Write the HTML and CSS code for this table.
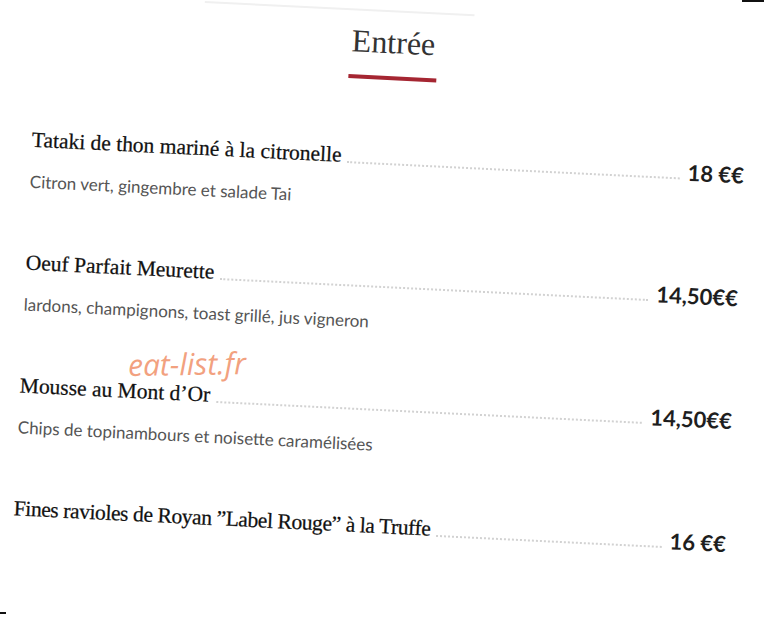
FILE: index.html
```html
<!DOCTYPE html>
<html lang="fr">
<head>
<meta charset="utf-8">
<title>Entrée</title>
<link rel="stylesheet" href="styles.css">
</head>
<body>
<div class="frame">
  <div class="page">
    <div class="topline"></div>
    <h1 class="heading">Entrée</h1>
    <div class="bar"></div>
    <div class="list">
      <div class="item">
        <div class="row"><span class="name">Tataki de thon mariné à la citronelle</span><span class="dots"></span><span class="price">18 €€</span></div>
        <div class="desc">Citron vert, gingembre et salade Tai</div>
      </div>
      <div class="item">
        <div class="row"><span class="name">Oeuf Parfait Meurette</span><span class="dots"></span><span class="price">14,50€€</span></div>
        <div class="desc">lardons, champignons, toast grillé, jus vigneron</div>
      </div>
      <div class="item">
        <div class="row"><span class="name">Mousse au Mont d’Or</span><span class="dots"></span><span class="price">14,50€€</span></div>
        <div class="desc">Chips de topinambours et noisette caramélisées</div>
      </div>
      <div class="item">
        <div class="row"><span class="name name-narrow">Fines ravioles de Royan ”Label Rouge” à la Truffe</span><span class="dots"></span><span class="price">16 €€</span></div>
      </div>
    </div>
  </div>
  <div class="watermark">eat-list.fr</div>
  <div class="mark mark-tr"></div>
  <div class="mark mark-bl"></div>
</div>
</body>
</html>
```
FILE: styles.css
```css
html, body {
  margin: 0;
  padding: 0;
  background: #fff;
}
.frame {
  position: relative;
  width: 764px;
  height: 620px;
  overflow: hidden;
  background: #fff;
}
.page {
  box-sizing: border-box;
  width: 764px;
  height: 620px;
  padding: 10px 27px 0 24px;
  transform: rotate(2.8deg);
  transform-origin: 382px 310px;
}
.topline {
  margin-left: 166px;
  width: 270px;
  height: 2px;
  background: #f0f0f0;
}
.heading {
  margin: 10px 0 0;
  text-align: center;
  font-family: "Liberation Serif", serif;
  font-weight: normal;
  font-size: 32px;
  line-height: 40px;
  color: #333;
}
.bar {
  margin: 14px auto 0;
  width: 88px;
  height: 4px;
  background: #a52632;
}
.list {
  margin-top: 63px;
  display: flex;
  flex-direction: column;
  gap: 57px;
}
.row {
  display: flex;
  align-items: center;
  height: 28px;
}
.name {
  font-family: "Liberation Serif", serif;
  font-size: 21.5px;
  color: #111;
  white-space: nowrap;
  -webkit-text-stroke: 0.25px #111;
}
.name-narrow {
  letter-spacing: -0.4px;
}
.dots {
  flex: 1;
  align-self: flex-end;
  margin: 0 8px 6px 6px;
  border-bottom: 2px dotted #d2d2d2;
}
.price {
  font-family: "Lato", sans-serif;
  font-weight: bold;
  font-size: 22px;
  color: #1e1e1e;
  white-space: nowrap;
}
.desc {
  margin-top: 18px;
  font-family: "Lato", sans-serif;
  font-size: 17px;
  line-height: 20px;
  color: #555;
}
.watermark {
  position: absolute;
  left: 128px;
  top: 343px;
  font-family: "Open Sans", sans-serif;
  font-style: italic;
  font-size: 30px;
  color: #f2a17f;
  transform: rotate(-1deg);
}
.mark {
  position: absolute;
  background: #111;
}
.mark-tr {
  right: 0;
  top: 0;
  width: 22px;
  height: 2px;
}
.mark-bl {
  left: 0;
  top: 612px;
  width: 6px;
  height: 2px;
}
```
